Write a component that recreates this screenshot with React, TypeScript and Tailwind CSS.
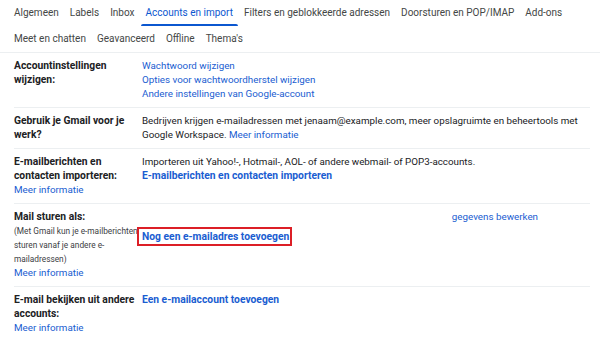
import React from 'react';

const tabsTop = ['Algemeen', 'Labels', 'Inbox', 'Accounts en import', 'Filters en geblokkeerde adressen', 'Doorsturen en POP/IMAP', 'Add-ons'];
const tabsBottom = ['Meet en chatten', 'Geavanceerd', 'Offline', "Thema's"];

function Tab({ label, active }: { label: string; active?: boolean }) {
  return (
    <div className={`px-[5px] h-[26px] flex items-center relative whitespace-nowrap ${active ? 'text-[#0b57d0]' : 'text-[#444746]'}`}>
      {label}
      {active && <div className="absolute left-0 right-0 bottom-0 h-[2px] bg-[#0b57d0] rounded-t" />}
    </div>
  );
}

function Row({ label, children, last }: { label: React.ReactNode; children: React.ReactNode; last?: boolean }) {
  return (
    <div className={`flex py-[6px] ${last ? '' : 'border-b border-[#eceff1]'}`}>
      <div className="w-[128px] shrink-0">{label}</div>
      <div className="flex-1 pr-[5px]">{children}</div>
    </div>
  );
}

const link = 'text-[#1a5dd1]';
const bold = 'font-bold text-[10.3px] whitespace-nowrap';
const more = <div className={link}>Meer informatie</div>;

export default function App() {
  return (
    <div className="w-[600px] h-[337px] bg-white overflow-hidden text-[9.8px] leading-[14px] text-[#202124]" style={{ fontFamily: 'Roboto, "Noto Sans", sans-serif' }}>
      {/* Tabs */}
      <div className="border-b border-[#eceff1] pl-[9px] text-[10px]">
        <div className="flex gap-[1px]">
          {tabsTop.map((t) => <Tab key={t} label={t} active={t === 'Accounts en import'} />)}
        </div>
        <div className="flex gap-[1px]">
          {tabsBottom.map((t) => <Tab key={t} label={t} />)}
        </div>
      </div>

      <div className="pl-[14px] pr-[10px]">
        <Row label={<div className={bold}>Accountinstellingen<br />wijzigen:</div>}>
          <div className={link}>Wachtwoord wijzigen</div>
          <div className={link}>Opties voor wachtwoordherstel wijzigen</div>
          <div className={link}>Andere instellingen van Google-account</div>
        </Row>

        <Row label={<div className={bold}>Gebruik je Gmail voor je<br />werk?</div>}>
          <div>
            Bedrijven krijgen e-mailadressen met jenaam@example.com, meer opslagruimte en beheertools met Google Workspace.{' '}
            <span className={link}>Meer informatie</span>
          </div>
        </Row>

        <Row label={<><div className={bold}>E-mailberichten en<br />contacten importeren:</div>{more}</>}>
          <div>Importeren uit Yahoo!-, Hotmail-, AOL- of andere webmail- of POP3-accounts.</div>
          <div className={`${link} ${bold}`}>E-mailberichten en contacten importeren</div>
        </Row>

        <Row
          label={
            <>
              <div className={bold}>Mail sturen als:</div>
              <div className="text-[8.3px] text-[#3c4043]">(Met Gmail kun je e-mailberichten sturen vanaf je andere e-mailadressen)</div>
              {more}
            </>
          }
        >
          <div className="flex justify-end pr-[47px]">
            <span className={link}>gegevens bewerken</span>
          </div>
          <div className="mt-[3px] -ml-[5px] inline-block border-2 border-[#dc1f26] pl-[3px] pr-[1px] py-[0.5px]">
            <span className={`${link} ${bold}`}>Nog een e-mailadres toevoegen</span>
          </div>
        </Row>

        <Row last label={<><div className={bold}>E-mail bekijken uit andere<br />accounts:</div>{more}</>}>
          <div className={`${link} ${bold}`}>Een e-mailaccount toevoegen</div>
        </Row>
      </div>
    </div>
  );
}
